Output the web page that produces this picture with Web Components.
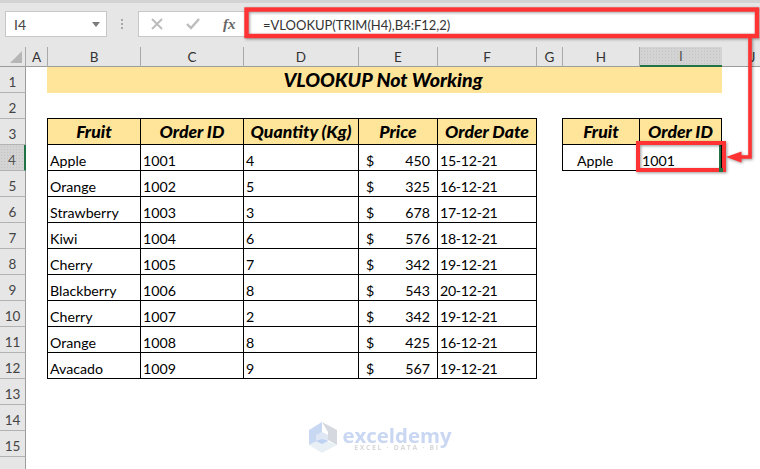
<!DOCTYPE html>
<html>
<head>
<meta charset="utf-8">
<style>
  html, body { margin: 0; padding: 0; background: #fff; }
  body { width: 760px; height: 469px; overflow: hidden; position: relative; font-family: Lato, "Liberation Sans", sans-serif; }
</style>
</head>
<body>
<xl-workbook>
  <xl-formula-bar slot="bar" name="I4" formula="=VLOOKUP(TRIM(H4),B4:F12,2)"></xl-formula-bar>
  <xl-sheet slot="sheet"></xl-sheet>
  <xl-annotations slot="over"></xl-annotations>
  <xl-watermark slot="over"></xl-watermark>
</xl-workbook>

<script>
const columns = [
  { name: "A", width: 22 },
  { name: "B", width: 93 },
  { name: "C", width: 103 },
  { name: "D", width: 115 },
  { name: "E", width: 79 },
  { name: "F", width: 99 },
  { name: "G", width: 26 },
  { name: "H", width: 77 },
  { name: "I", width: 82 },
  { name: "J", width: 62 }
];

const rowCount = 16;
const lastLabelledRow = 15;
const selected = { col: "I", row: 4 };

const tableHead = ["Fruit", "Order ID", "Quantity (Kg)", "Price", "Order Date"];
const tableRows = [
  ["Apple", "1001", "4", "450", "15-12-21"],
  ["Orange", "1002", "5", "325", "16-12-21"],
  ["Strawberry", "1003", "3", "678", "17-12-21"],
  ["Kiwi", "1004", "6", "576", "18-12-21"],
  ["Cherry", "1005", "7", "342", "19-12-21"],
  ["Blackberry", "1006", "8", "543", "20-12-21"],
  ["Cherry", "1007", "2", "342", "19-12-21"],
  ["Orange", "1008", "8", "425", "16-12-21"],
  ["Avacado", "1009", "9", "567", "19-12-21"]
];

class XlWorkbook extends HTMLElement {
  constructor(...args) {
    super(...args);
    this.attachShadow({ mode: "open" }).innerHTML = `
      <style>
        :host { display: flex; flex-direction: column; width: 760px; height: 469px; overflow: hidden; }
      </style>
      <slot name="bar"></slot>
      <slot name="sheet"></slot>
      <slot name="over"></slot>
    `;
  }
}

class XlFormulaBar extends HTMLElement {
  constructor(...args) {
    super(...args);
    this.attachShadow({ mode: "open" });
  }

  connectedCallback() {
    this.shadowRoot.innerHTML = `
      <style>
        :host {
          display: flex;
          height: 47px;
          box-sizing: border-box;
          padding: 8px 0 10px 5px;
          background: #e6e6e6;
          border-top: 3px solid #d3d3d3;
          color: #444;
          font-size: 14px;
        }
        .name {
          width: 102px;
          box-sizing: border-box;
          display: flex;
          align-items: center;
          justify-content: space-between;
          padding: 0 6px 0 8px;
          background: #fff;
          border: 1px solid #c6c6c6;
        }
        .grip { width: 31px; display: flex; justify-content: center; align-items: center; }
        .buttons {
          width: 108px;
          box-sizing: border-box;
          display: flex;
          align-items: center;
          background: #fff;
          border: 1px solid #c6c6c6;
          border-right: 0;
          padding-left: 12px;
        }
        .fx { font: italic 700 15px "Liberation Serif", serif; color: #666; margin-left: 23px; }
        .input {
          flex: 1;
          background: #fff;
          padding: 3px 0 0 17px;
          line-height: 23px;
          color: #333;
          font-size: 13px;
        }
      </style>
      <div class="name">
        <span>${this.getAttribute("name")}</span>
        <svg width="8" height="5" viewBox="0 0 8 5"><path d="M0 0h8L4 5z" fill="#7b7b7b"/></svg>
      </div>
      <div class="grip">
        <svg width="3" height="11" viewBox="0 0 3 11" fill="#a8a8a8"><rect width="2" height="2" y="0"/><rect width="2" height="2" y="4"/><rect width="2" height="2" y="8"/></svg>
      </div>
      <div class="buttons">
        <svg width="12" height="12" viewBox="0 0 12 12" fill="none" stroke="#bcbcbc" stroke-width="2"><path d="M1 1l10 10M11 1L1 11"/></svg>
        <svg style="margin-left:23px" width="14" height="12" viewBox="0 0 14 12" fill="none" stroke="#bcbcbc" stroke-width="2.4"><path d="M1 6l4 4 8-9"/></svg>
        <span class="fx">fx</span>
      </div>
      <div class="input">${this.getAttribute("formula")}</div>
    `;
  }
}

class XlSheet extends HTMLElement {
  constructor(...args) {
    super(...args);
    this.attachShadow({ mode: "open" });
  }

  connectedCallback() {
    const colHeads = columns.map((c, i) => `
      <div class="head col ${c.name === selected.col ? "on" : ""}" style="grid-column:${i + 2};grid-row:1">${c.name}</div>
    `).join("");

    let rowHeads = "";
    for (let r = 1; r <= rowCount; r++) {
      // row 16 is cut by the window, only its box shows
      const label = r <= lastLabelledRow ? r : "";
      rowHeads += `<div class="head row ${r === selected.row ? "on" : ""}" style="grid-column:1;grid-row:${r + 1}">${label}</div>`;
    }

    this.shadowRoot.innerHTML = `
      <style>
        :host {
          display: grid;
          grid-template-columns: 26px ${columns.map(c => c.width + "px").join(" ")};
          grid-template-rows: 20px repeat(${rowCount}, 26px);
          width: 760px;
          height: 422px;
          overflow: hidden;
          background: #fff;
          font-size: 14px;
        }
        .head {
          background: #e6e6e6;
          color: #333;
          box-sizing: border-box;
          display: flex;
          align-items: center;
          justify-content: center;
          font-size: 13.5px;
        }
        .col { border-right: 1px solid #a9a9a9; border-bottom: 1px solid #9c9c9c; }
        .row { border-bottom: 1px solid #b2b2b2; border-right: 1px solid #9c9c9c; padding-top: 5px; color: #444; }
        .head.on {
          background-color: #d3d3d3;
          background-image: radial-gradient(#c4c4c4 0.6px, transparent 0.7px);
          background-size: 3px 3px;
          color: #555;
        }
        .col.on { border-bottom: 2px solid #217346; border-right: 0; }
        .row.on { border-right: 2px solid #217346; }
        .corner {
          grid-column: 1;
          grid-row: 1;
          background: #e6e6e6;
          border-bottom: 1px solid #9c9c9c;
          border-right: 1px solid #a9a9a9;
          display: flex;
          align-items: flex-end;
          justify-content: flex-end;
          padding: 0 3px 3px 0;
        }
      </style>
      <div class="corner"><svg width="12" height="12" viewBox="0 0 12 12"><path d="M12 0v12H0z" fill="#b6b6b6"/></svg></div>
      ${colHeads}
      ${rowHeads}
      <slot></slot>
    `;

    this.fillCells();
  }

  addCell(col, row, attrs, html, span) {
    const cell = document.createElement("xl-cell");
    const start = columns.findIndex(c => c.name === col) + 2;
    cell.style.gridColumn = span ? `${start} / span ${span}` : `${start}`;
    cell.style.gridRow = `${row + 1}`;
    attrs.forEach(a => cell.setAttribute(a, ""));
    cell.innerHTML = html;
    this.appendChild(cell);
    return cell;
  }

  fillCells() {
    this.addCell("B", 1, ["title"], "VLOOKUP Not Working", 8);

    ["B", "C", "D", "E", "F"].forEach((col, i) => {
      this.addCell(col, 3, ["th"], tableHead[i]);
    });
    tableRows.forEach((data, r) => {
      ["B", "C", "D", "E", "F"].forEach((col, i) => {
        if (col === "E") {
          this.addCell(col, r + 4, ["money"], `<span>$</span><span>${data[i]}</span>`);
        } else if (col === "F") {
          this.addCell(col, r + 4, ["date"], data[i]);
        } else {
          this.addCell(col, r + 4, [], data[i]);
        }
      });
    });

    this.addCell("H", 3, ["th"], "Fruit");
    this.addCell("I", 3, ["th"], "Order ID");
    this.addCell("H", 4, ["indent"], "Apple");
    this.addCell("I", 4, ["active"], "1001");
  }
}

class XlCell extends HTMLElement {
  constructor(...args) {
    super(...args);
    this.attachShadow({ mode: "open" }).innerHTML = `
      <style>
        :host {
          display: flex;
          align-items: flex-end;
          box-sizing: border-box;
          margin: -1px 0 0 -1px;
          padding: 0 3px 0 2px;
          border: 1px solid #000;
          color: #000;
          font-size: 14.2px;
          line-height: 18px;
          white-space: nowrap;
        }
        :host([th]) {
          justify-content: center;
          align-items: center;
          padding: 1px 0 0;
          background: #ffe599;
          font-weight: 900;
          font-style: italic;
          font-size: 17.6px;
        }
        :host([title]) {
          margin: 0 0 0 -1px;
          border: 0;
          justify-content: center;
          align-items: center;
          padding: 0 3px 0 0;
          background: #ffe599;
          font-weight: 900;
          font-style: italic;
          font-size: 19.6px;
        }
        :host([money]) { justify-content: space-between; padding: 0 7px 0 7px; }
        :host([date]) { letter-spacing: -0.3px; }
        :host([indent]) { padding-left: 14px; }
        :host([active]) { box-shadow: inset -2px 0 0 #217346; }
      </style>
      <slot></slot>
    `;
  }
}

class XlAnnotations extends HTMLElement {
  constructor(...args) {
    super(...args);
    this.attachShadow({ mode: "open" }).innerHTML = `
      <style>
        :host { position: absolute; left: 0; top: 0; width: 760px; height: 469px; pointer-events: none; }
        svg { display: block; filter: drop-shadow(1.5px 1.5px 1.5px rgba(0, 0, 0, 0.4)); }
      </style>
      <svg width="760" height="469" viewBox="0 0 760 469" fill="none" stroke="#ff3333">
        <rect x="246.5" y="9.5" width="510.5" height="26.5" stroke-width="4.4"/>
        <rect x="638" y="143" width="86" height="27" stroke-width="4"/>
        <rect x="719" y="168" width="4" height="4" fill="#217346" stroke="none"/>
        <path d="M750 37V157H738" stroke-width="3.6"/>
        <path d="M726 157L741.5 151.5V162.5z" fill="#ff3333" stroke="none"/>
      </svg>
    `;
  }
}

class XlWatermark extends HTMLElement {
  constructor(...args) {
    super(...args);
    this.attachShadow({ mode: "open" }).innerHTML = `
      <style>
        :host {
          position: absolute;
          left: 309px;
          top: 422px;
          display: flex;
          gap: 5px;
          pointer-events: none;
          filter: blur(0.3px);
        }
        .words { display: flex; flex-direction: column; align-items: center; margin-top: 4px; width: 110px; }
        .big {
          font: 700 20.4px/18px "Open Sans", sans-serif;
          color: #c9d7f2;
        }
        .small {
          font: 700 6.8px/8px "Open Sans", sans-serif;
          color: #d8d8d8;
          letter-spacing: 1.7px;
        }
      </style>
      <svg width="28" height="31" viewBox="0 0 28 31">
        <path d="M13 0L0 8V23L13 17V9z" fill="#c8d8f3"/>
        <path d="M13 0L28 8V23L19 18V10z" fill="#d5d9df"/>
        <path d="M0 23L13 17L28 23L13 31z" fill="#e8f0f6"/>
        <path d="M13 10L19 13V19L13 22L7 19V13z" fill="#dfe7f4"/>
        <path d="M13 17L19 19L13 22L7 19z" fill="#bdd1f1"/>
      </svg>
      <div class="words">
        <div class="big">exceldemy</div>
        <div class="small">EXCEL · DATA · BI</div>
      </div>
    `;
  }
}

customElements.define("xl-workbook", XlWorkbook);
customElements.define("xl-formula-bar", XlFormulaBar);
customElements.define("xl-sheet", XlSheet);
customElements.define("xl-cell", XlCell);
customElements.define("xl-annotations", XlAnnotations);
customElements.define("xl-watermark", XlWatermark);
</script>
</body>
</html>
